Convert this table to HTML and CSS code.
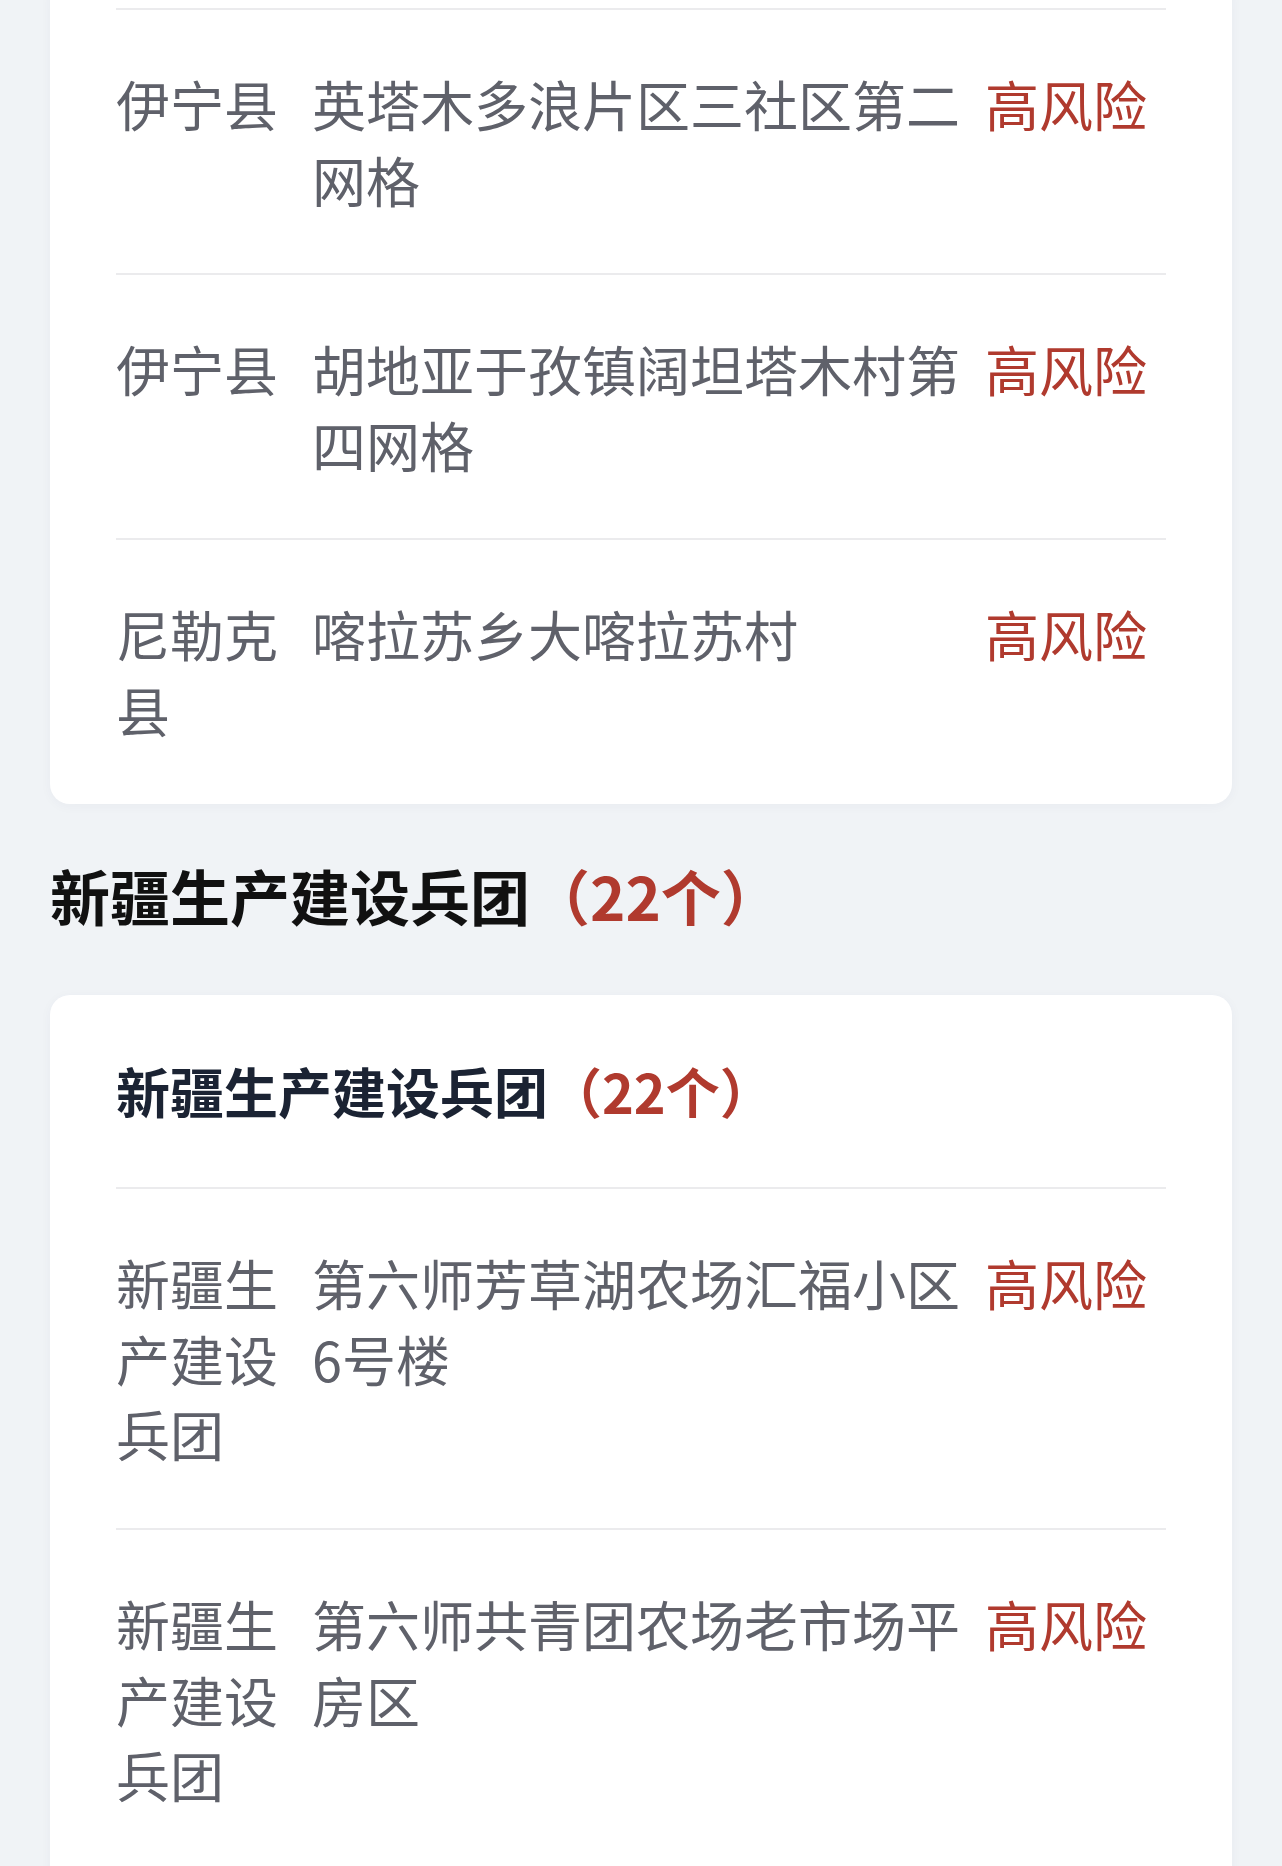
FILE: index.html
```html
<!DOCTYPE html>
<html lang="zh-CN">
<head>
<meta charset="utf-8">
<title>风险地区</title>
<link rel="stylesheet" href="styles.css">
</head>
<body>
<main class="page">
  <section class="card card--cut">
    <div class="row row--first">
      <div class="col-area">伊宁县</div>
      <div class="col-place">英塔木多浪片区三社区第二网格</div>
      <div class="col-risk">高风险</div>
    </div>
    <div class="row">
      <div class="col-area">伊宁县</div>
      <div class="col-place">胡地亚于孜镇阔坦塔木村第四网格</div>
      <div class="col-risk">高风险</div>
    </div>
    <div class="row">
      <div class="col-area">尼勒克县</div>
      <div class="col-place">喀拉苏乡大喀拉苏村</div>
      <div class="col-risk">高风险</div>
    </div>
  </section>

  <h2 class="section-title">新疆生产建设兵团<span class="count">（22个）</span></h2>

  <section class="card card--open">
    <div class="card-head">新疆生产建设兵团<span class="count">（22个）</span></div>
    <div class="row">
      <div class="col-area">新疆生产建设兵团</div>
      <div class="col-place">第六师芳草湖农场汇福小区6号楼</div>
      <div class="col-risk">高风险</div>
    </div>
    <div class="row">
      <div class="col-area">新疆生产建设兵团</div>
      <div class="col-place">第六师共青团农场老市场平房区</div>
      <div class="col-risk">高风险</div>
    </div>
  </section>
</main>
</body>
</html>
```

FILE: styles.css
```css
html, body {
  margin: 0;
  padding: 0;
}

body {
  background: #f0f3f6;
  font-family: "Noto Sans CJK SC", "Noto Sans", sans-serif;
  overflow: hidden;
}

.page {
  padding: 0 50px;
}

.card {
  background: #ffffff;
  border-radius: 20px;
  padding: 0 66px;
  box-shadow: 0 2px 12px rgba(40, 60, 90, 0.04);
}

.card--cut {
  margin-top: -20px;
  padding-top: 28px;
}

.card--open {
  padding-bottom: 60px;
}

.row {
  display: grid;
  grid-template-columns: 196px 673px 1fr;
  padding: 56px 0;
  border-top: 2px solid #ebebed;
  font-size: 54px;
  line-height: 75.6px;
  color: #5f616a;
}

.col-risk {
  color: #b03a2e;
}

.section-title {
  margin: 0;
  padding: 49px 0 58px;
  font-size: 60px;
  line-height: 84px;
  font-weight: 700;
  color: #111111;
}

.count {
  color: #b03a2e;
}

.card-head {
  padding: 58px 0 59px;
  font-size: 54px;
  line-height: 75.6px;
  font-weight: 700;
  color: #1b2333;
}
```
